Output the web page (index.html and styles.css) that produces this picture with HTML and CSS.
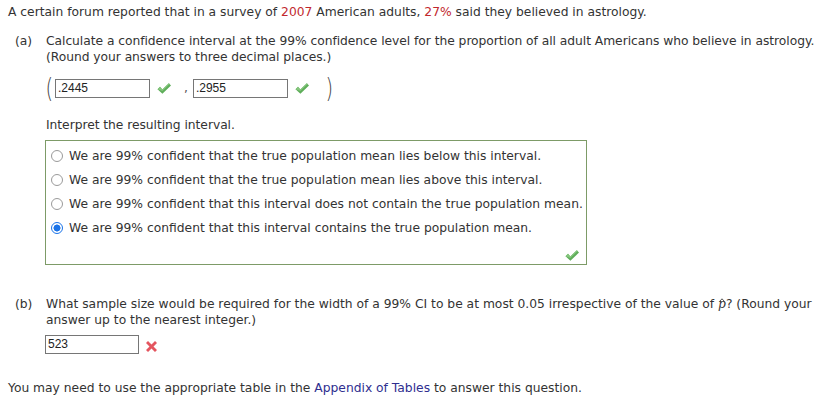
FILE: index.html
```html
<!DOCTYPE html>
<html>
<head>
<meta charset="utf-8">
<link rel="stylesheet" href="styles.css">
</head>
<body>
<div class="page">
  <p class="intro">A certain forum reported that in a survey of <span class="red">2007</span> American adults, <span class="red">27%</span> said they believed in astrology.</p>

  <div class="part part-a">
    <span class="label">(a)</span>
    <div class="part-body">
      <p class="q">Calculate a confidence interval at the 99% confidence level for the proportion of all adult Americans who believe in astrology.<br>(Round your answers to three decimal places.)</p>
      <div class="interval">
        <span class="paren">(</span>
        <span class="field">.2445</span>
        <svg class="check" width="16" height="13" viewBox="0 0 16 13"><path d="M1.5 7.2 L4 4.8 L6.4 7.4 L12.8 1.3 L15 3.6 L6.4 11.8 Z" fill="#5fae5a"/><path d="M1.5 7.2 L4 4.8 L6.4 7.4 L12.8 1.3 L13.6 2.1 L6.4 9 Z" fill="#86c67e"/></svg>
        <span class="comma">,</span>
        <span class="field">.2955</span>
        <svg class="check" width="16" height="13" viewBox="0 0 16 13"><path d="M1.5 7.2 L4 4.8 L6.4 7.4 L12.8 1.3 L15 3.6 L6.4 11.8 Z" fill="#5fae5a"/><path d="M1.5 7.2 L4 4.8 L6.4 7.4 L12.8 1.3 L13.6 2.1 L6.4 9 Z" fill="#86c67e"/></svg>
        <span class="paren close">)</span>
      </div>
      <p class="q interpret">Interpret the resulting interval.</p>
      <div class="choices">
        <label class="choice"><span class="radio"></span>We are 99% confident that the true population mean lies below this interval.</label>
        <label class="choice"><span class="radio"></span>We are 99% confident that the true population mean lies above this interval.</label>
        <label class="choice"><span class="radio"></span>We are 99% confident that this interval does not contain the true population mean.</label>
        <label class="choice"><span class="radio on"></span>We are 99% confident that this interval contains the true population mean.</label>
        <div class="box-check">
          <svg class="check" width="16" height="13" viewBox="0 0 16 13"><path d="M1.5 7.2 L4 4.8 L6.4 7.4 L12.8 1.3 L15 3.6 L6.4 11.8 Z" fill="#5fae5a"/><path d="M1.5 7.2 L4 4.8 L6.4 7.4 L12.8 1.3 L13.6 2.1 L6.4 9 Z" fill="#86c67e"/></svg>
        </div>
      </div>
    </div>
  </div>

  <div class="part part-b">
    <span class="label">(b)</span>
    <div class="part-body">
      <p class="q">What sample size would be required for the width of a 99% CI to be at most 0.05 irrespective of the value of <span class="phat">p<svg class="hat" width="6" height="4" viewBox="0 0 6 4"><path d="M0.5 3.5 L3 0.8 L5.5 3.5" fill="none" stroke="#444" stroke-width="0.9"/></svg></span>? (Round your<br>answer up to the nearest integer.)</p>
      <div class="answer">
        <span class="field">523</span>
        <svg class="cross" width="13" height="13" viewBox="0 0 13 13"><path d="M1 3 L3 1 L6.5 4.5 L10 1 L12 3 L8.5 6.5 L12 10 L10 12 L6.5 8.5 L3 12 L1 10 L4.5 6.5 Z" fill="#e4555f"/></svg>
      </div>
    </div>
  </div>

  <p class="footer">You may need to use the appropriate table in the <span class="link">Appendix of Tables</span> to answer this question.</p>
</div>
</body>
</html>
```

FILE: styles.css
```css
html, body {
  margin: 0;
  padding: 0;
  background: #ffffff;
}

.page {
  padding: 4px 0 0 8px;
  font-family: "DejaVu Sans", Verdana, sans-serif;
  font-size: 12.3px;
  line-height: 16px;
  color: #333333;
  width: 810px;
}

p {
  margin: 0;
}

.q {
  white-space: nowrap;
}

.part-a .q {
  letter-spacing: -0.045px;
}

.red {
  color: #c1272d;
}

.part {
  display: flex;
  margin-left: 7px;
}

.part-a {
  margin-top: 13px;
}

.label {
  width: 31px;
  flex: none;
}

.part-body {
  flex: 1;
}

.interval {
  display: flex;
  align-items: center;
  height: 24px;
  margin-top: 11px;
}

.paren {
  font-size: 26px;
  line-height: 24px;
  font-weight: 100;
  color: #444;
  width: 11px;
  margin-left: -2px;
  transform: scaleX(0.75);
}

.paren.close {
  margin-left: 14px;
}

.field {
  display: inline-block;
  box-sizing: border-box;
  width: 94px;
  height: 19px;
  border: 1px solid #767676;
  font-family: "Liberation Sans", Arial, sans-serif;
  font-size: 12px;
  line-height: 17px;
  padding-left: 2px;
  color: #222;
  background: #fff;
}

.interval .field {
  width: 95px;
}

.interval .check {
  margin-left: 6px;
}

.comma {
  margin-left: 12px;
  margin-right: 5px;
  color: #555;
}

.interpret {
  margin-top: 17px;
}

.choices {
  box-sizing: border-box;
  width: 542px;
  height: 125px;
  margin-top: 7px;
  margin-left: -1px;
  border: 1px solid #7d9b67;
  padding: 3px 0 0 5px;
  display: flex;
  flex-direction: column;
}

.choice {
  display: flex;
  align-items: center;
  height: 24px;
}

.radio {
  box-sizing: border-box;
  width: 12px;
  height: 12px;
  border: 1px solid #9a9a9a;
  border-radius: 50%;
  margin-right: 6px;
  background: #fff;
  flex: none;
}

.radio.on {
  border: 1px solid #1a73e8;
  background: radial-gradient(circle, #1a73e8 0 3.2px, #fff 3.8px);
}

.box-check {
  display: flex;
  justify-content: flex-end;
  padding-right: 6px;
  margin-top: 9px;
}

.part-b {
  margin-top: 31px;
}

.phat {
  position: relative;
  font-family: "DejaVu Serif", serif;
  font-style: italic;
}

.hat {
  position: absolute;
  left: 1px;
  top: 1px;
}

.answer {
  display: flex;
  align-items: center;
  margin-top: 7px;
  margin-left: -1px;
}

.answer .cross {
  margin-left: 6px;
  margin-top: 4px;
}

.footer {
  margin-top: 26px;
}

.link {
  color: #2e2e8f;
}
```
